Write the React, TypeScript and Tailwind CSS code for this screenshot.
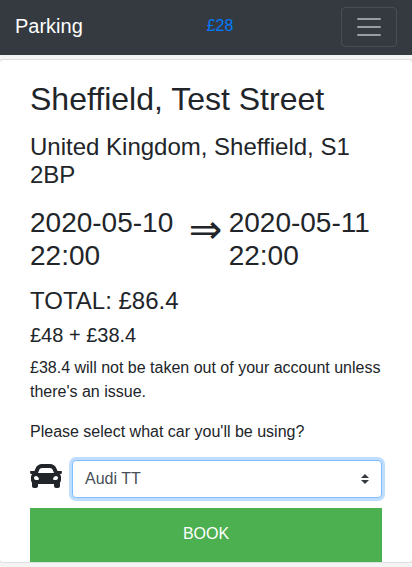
import { FaCar } from "react-icons/fa";

function Navbar() {
  return (
    <nav className="flex h-[55px] items-center justify-between bg-[#343a40] px-[15px]">
      <a className="w-[84px] whitespace-nowrap pb-[3px] text-xl leading-[30px] text-white">Parking</a>
      <a className="pb-[3px] text-base text-[#007bff]">£28</a>
      <button className="-mt-px flex h-10 w-14 items-center justify-center rounded border border-white/10">
        <svg viewBox="0 0 30 30" className="size-[30px]" fill="none">
          <path
            d="M4 7h22M4 15h22M4 23h22"
            stroke="rgba(255,255,255,0.5)"
            strokeWidth="2"
            strokeLinecap="round"
            strokeMiterlimit="10"
          />
        </svg>
      </button>
    </nav>
  );
}

function CarSelect() {
  return (
    <div className="flex items-center">
      <FaCar className="mb-1.5 size-8 shrink-0" />
      <div className="ml-[10px] flex h-[38px] flex-1 items-center justify-between rounded border border-[#80bdff] bg-white pl-3 pr-3 text-base text-[#495057] shadow-[0_0_0_3px_rgba(0,123,255,0.25)]">
        <span>Audi TT</span>
        <svg viewBox="0 0 4 5" className="h-[10px] w-2" fill="#343a40">
          <path d="M2 0L0 2h4zm0 5L0 3h4z" />
        </svg>
      </div>
    </div>
  );
}

export default function App() {
  return (
    <div className="h-[567px] overflow-hidden bg-[#f4f4f4] font-['Liberation_Sans',Arial,sans-serif] text-[#212529]">
      <Navbar />
      <main className="-mx-px mt-1 h-[504px] rounded border border-black/[.125] bg-white px-[30px] pt-5">
        <h1 className="mb-[14.6px] text-[32px] leading-[38.4px]">Sheffield, Test Street</h1>
        <h4 className="mb-[16.6px] text-2xl leading-[28px]">United Kingdom, Sheffield, S1 2BP</h4>
        <div className="flex text-[28px] leading-[33.6px]">
          <h3 className="w-[158.7px]">
            2020-05-10
            <br />
            22:00
          </h3>
          <span className="-mt-px w-10 font-['DejaVu_Sans',sans-serif] text-[40px] leading-[48px]">⇒</span>
          <h3 className="flex-1 whitespace-nowrap">
            2020-05-11
            <br />
            22:00
          </h3>
        </div>
        <h4 className="mt-[14px] text-2xl leading-[28.8px]">TOTAL: £86.4</h4>
        <h5 className="mt-[7.2px] text-xl leading-6">£48 + £38.4</h5>
        <p className="mt-[9.2px] text-base leading-6">
          £38.4 will not be taken out of your account unless there's an issue.
        </p>
        <p className="mb-4 mt-4 text-base leading-6">Please select what car you'll be using?</p>
        <CarSelect />
        <button className="mt-[10px] block h-[54px] w-full bg-[#4caf50] pb-0.5 text-base text-white">BOOK</button>
      </main>
    </div>
  );
}
